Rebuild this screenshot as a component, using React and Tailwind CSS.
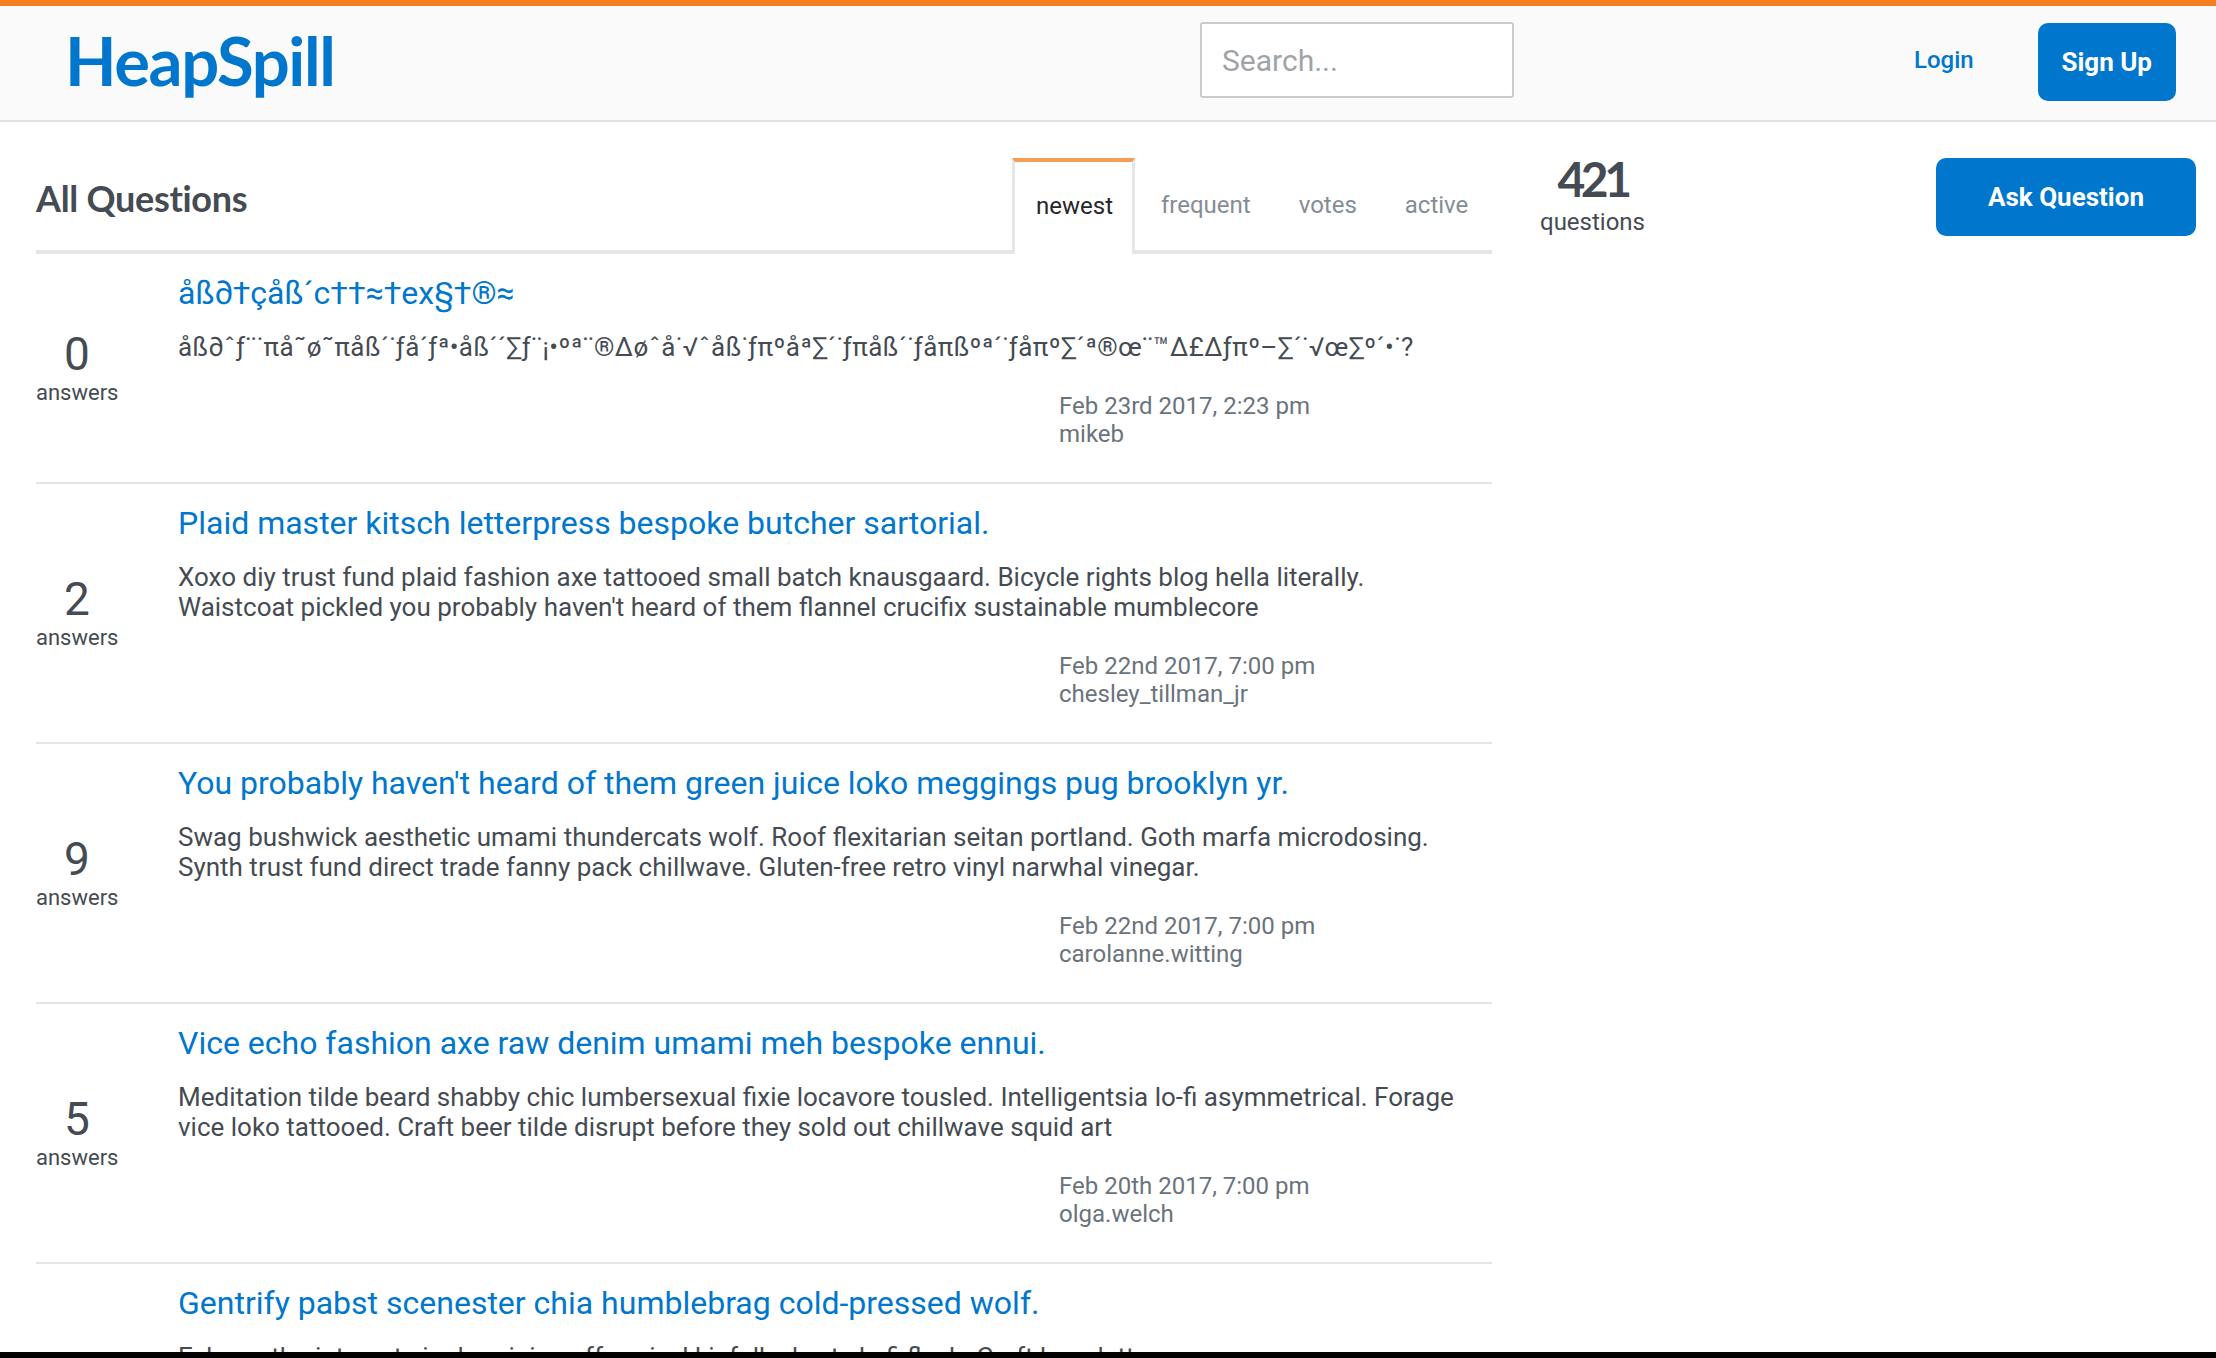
const questions = [
  {
    answers: 0,
    title: "åß∂†çåß´c††≈†ex§†®≈",
    body: ["åß∂ˆƒ¨˙πå˜ø˜πåß´˙ƒå´ƒª•åß´´∑ƒ¨¡•ºª¨®∆øˆå˙√ˆåß˙ƒπºåª∑´˙ƒπåß´˙ƒåπßºª´˙ƒåπº∑´ª®œ¨™∆£∆ƒπº–∑´˙√œ∑º´•˙?"],
    bodyClass: "tracking-[0.4px]",
    date: "Feb 23rd 2017, 2:23 pm",
    author: "mikeb",
  },
  {
    answers: 2,
    title: "Plaid master kitsch letterpress bespoke butcher sartorial.",
    body: [
      "Xoxo diy trust fund plaid fashion axe tattooed small batch knausgaard. Bicycle rights blog hella literally.",
      "Waistcoat pickled you probably haven't heard of them flannel crucifix sustainable mumblecore",
    ],
    date: "Feb 22nd 2017, 7:00 pm",
    author: "chesley_tillman_jr",
  },
  {
    answers: 9,
    title: "You probably haven't heard of them green juice loko meggings pug brooklyn yr.",
    body: [
      "Swag bushwick aesthetic umami thundercats wolf. Roof flexitarian seitan portland. Goth marfa microdosing.",
      "Synth trust fund direct trade fanny pack chillwave. Gluten-free retro vinyl narwhal vinegar.",
    ],
    date: "Feb 22nd 2017, 7:00 pm",
    author: "carolanne.witting",
  },
  {
    answers: 5,
    title: "Vice echo fashion axe raw denim umami meh bespoke ennui.",
    body: [
      "Meditation tilde beard shabby chic lumbersexual fixie locavore tousled. Intelligentsia lo-fi asymmetrical. Forage",
      "vice loko tattooed. Craft beer tilde disrupt before they sold out chillwave squid art",
    ],
    date: "Feb 20th 2017, 7:00 pm",
    author: "olga.welch",
  },
  {
    answers: 3,
    title: "Gentrify pabst scenester chia humblebrag cold-pressed wolf.",
    body: [
      "Echo goth pinterest single-origin coffee vinyl kinfolk shorts kefi flash. Craft beer letterpress",
      "Small batch typewriter kogi slow-carb everyday carry mumblecore",
    ],
    date: "Feb 18th 2017, 7:00 pm",
    author: "heapspill",
  },
];

const QuestionRow = ({ question }) => {
  return (
    <div className="flex items-center border-b-2 border-[#e4e6e8] pt-[19px] pb-[34px]">
      <div className="mr-[60px] w-[82px] shrink-0 pt-[13px] text-center">
        <div className="text-[46px] font-normal leading-[50px] text-[#454b52]">{question.answers}</div>
        <div className="mt-[1px] text-[22px] leading-[26px] text-[#454b52]">answers</div>
      </div>
      <div className="flex-1">
        <a className="block text-[32px] leading-[40px] text-[#0077cc]">{question.title}</a>
        <div className={`mt-[19px] text-[26px] leading-[30px] text-[#454b52] ${question.bodyClass || ""}`}>
          {question.body.map((line) => (
            <div key={line} className="whitespace-nowrap">{line}</div>
          ))}
        </div>
        <div className="mt-[30px] pl-[881px] text-[24px] leading-[28px] text-[#6a737c]">
          <div>{question.date}</div>
          <div>{question.author}</div>
        </div>
      </div>
    </div>
  );
};

const App = () => {
  return (
    <div className="flex h-[1358px] flex-col overflow-hidden bg-white font-['Roboto',sans-serif]">
      <header className="flex h-[122px] shrink-0 items-center border-t-[6px] border-b-2 border-t-[#f48024] border-b-[#e0e0e0] bg-[#fafafb] pb-[4px]">
        <div className="mb-[2px] w-[1200px] pl-[65px] font-['Lato'] text-[67px] font-bold leading-none tracking-[-1.4px] text-[#0077cc]">
          HeapSpill
        </div>
        <input
          placeholder="Search..."
          className="mb-[2px] h-[76px] w-[314px] rounded-[3px] border-2 border-[#c8ccd0] bg-white px-[20px] text-[30px] placeholder:text-[#a0a4a8]"
        />
        <a className="mb-[2px] ml-[400px] text-[24px] font-medium text-[#0077cc]">Login</a>
        <button className="ml-[64px] mt-[2px] h-[78px] w-[138px] rounded-[10px] bg-[#0077cc] text-[26px] font-bold text-white">
          Sign Up
        </button>
      </header>

      <main className="flex min-h-0 flex-1 overflow-hidden pl-[36px] pt-[36px]">
        <section className="w-[1456px] shrink-0">
          <div className="flex h-[96px] items-stretch border-b-4 border-[#e4e6e8]">
            <h1 className="flex-1 pt-[16px] font-['Lato'] text-[36px] font-bold leading-[48px] tracking-[-0.3px] text-[#454b52]">
              All Questions
            </h1>
            <div className="mb-[-4px] flex w-[480px] text-[24px] text-[#848d95]">
              <div className="flex h-[96px] w-[123px] items-center justify-center border-x-[3px] border-t-4 border-x-[#e4e6e8] border-t-[#f69c55] bg-white pb-[5px] pl-[2px] text-[#24272a]">
                newest
              </div>
              <div className="flex h-[92px] items-center pl-[26px] pt-[2px]">frequent</div>
              <div className="flex h-[92px] items-center pl-[48px] pt-[2px]">votes</div>
              <div className="flex h-[92px] items-center pl-[48px] pt-[2px]">active</div>
            </div>
          </div>
          {questions.map((question) => (
            <QuestionRow key={question.title} question={question} />
          ))}
        </section>
        <aside className="flex flex-1 items-start justify-between pl-[48px] pr-[20px]">
          <div className="w-[105px] text-center">
            <div className="font-['Lato'] text-[48px] font-bold leading-[42px] tracking-[-4.5px] text-[#454b52]">421</div>
            <div className="mt-[7px] text-[24px] leading-[30px] text-[#454b52]">questions</div>
          </div>
          <button className="h-[78px] w-[260px] rounded-[10px] bg-[#0077cc] text-[26px] font-bold text-white">
            Ask Question
          </button>
        </aside>
      </main>
      <div className="h-[6px] shrink-0 bg-black" />
    </div>
  );
};

export default App;
